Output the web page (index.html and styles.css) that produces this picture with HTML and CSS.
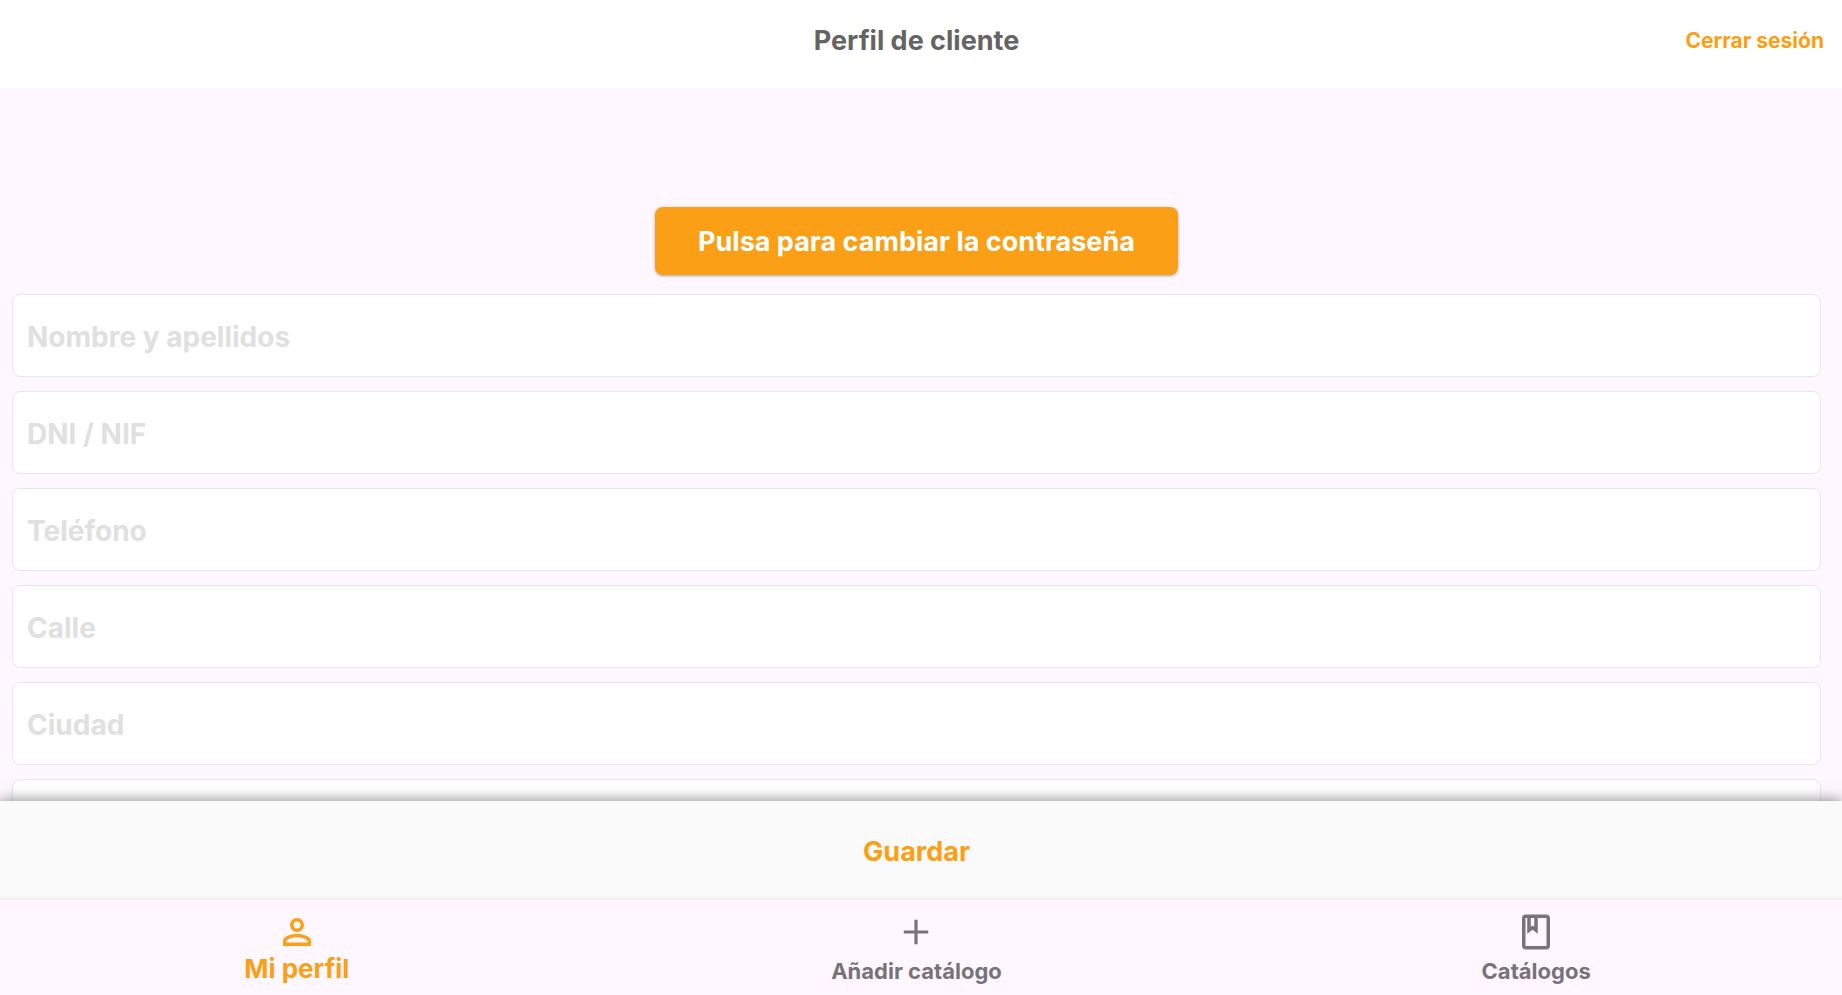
FILE: index.html
```
<!DOCTYPE html>
<html lang="es">
<head>
<meta charset="UTF-8">
<meta name="viewport" content="width=device-width,initial-scale=1">
<title>Perfil de cliente</title>
<link rel="stylesheet" href="styles.css">
</head>
<body>
<header class="topbar">
  <h1>Perfil de cliente</h1>
  <button type="button" class="logout">Cerrar sesión</button>
</header>

<main class="content">
  <button type="button" class="password-btn">Pulsa para cambiar la contraseña</button>
  <form class="fields" id="profileForm">
    <input type="text" name="nombre" aria-label="Nombre y apellidos" placeholder="Nombre y apellidos">
    <input type="text" name="dni" aria-label="DNI / NIF" placeholder="DNI / NIF">
    <input type="tel" name="telefono" aria-label="Teléfono" placeholder="Teléfono">
    <input type="text" name="calle" aria-label="Calle" placeholder="Calle">
    <input type="text" name="ciudad" aria-label="Ciudad" placeholder="Ciudad">
    <input type="text" name="provincia" aria-label="Provincia">
  </form>
</main>

<div class="savebar">
  <button type="submit" form="profileForm" class="save">Guardar</button>
</div>

<nav class="tabs">
  <a href="#perfil" class="tab active" aria-current="page">
    <svg viewBox="0 0 24 24" fill="currentColor"><path d="M12 6a2 2 0 1 1 0 4 2 2 0 0 1 0-4m0 9c2.7 0 5.8 1.29 6 2v1H6v-.99c.2-.72 3.3-2.01 6-2.01m0-11a4 4 0 1 0 0 8 4 4 0 0 0 0-8zm0 9c-2.67 0-8 1.34-8 4v3h16v-3c0-2.66-5.33-4-8-4z"/></svg>
    <span>Mi perfil</span>
  </a>
  <a href="#nuevo" class="tab">
    <svg viewBox="0 0 24 24" fill="currentColor"><path d="M19 12.9h-6.1V19h-1.8v-6.1H5v-1.8h6.1V5h1.8v6.1H19z"/></svg>
    <span>Añadir catálogo</span>
  </a>
  <a href="#catalogos" class="tab">
    <svg viewBox="0 0 24 24" fill="currentColor"><path d="M18 2H6c-1.1 0-2 .9-2 2v16c0 1.1.9 2 2 2h12c1.1 0 2-.9 2-2V4c0-1.1-.9-2-2-2zM9 4h2v5l-1-.75L9 9V4zm9 16H6V4h1v9l3-2.25L13 13V4h5v16z"/></svg>
    <span>Catálogos</span>
  </a>
</nav>
</body>
</html>
```
FILE: styles.css
```
:root{--bg:#fef7ff;--bar:#fafafa;--accent:#fa9f16;--title:#646464;--muted:#787279;
      --line:#e9e6eb;--hint:#e0e0e0}
*{box-sizing:border-box;margin:0;padding:0}
body,button,input{font-family:Inter,"Open Sans",sans-serif;font-weight:700}
button{border:none;background:none;cursor:pointer}
body{height:100vh;display:flex;flex-direction:column;overflow:hidden;background:var(--bg)}

/* cabecera */
.topbar{display:grid;grid-template-columns:1fr auto 1fr;align-items:center;
  height:88px;padding:0 18px 6px 9px;background:#fff}
.topbar h1{grid-column:2;font-size:27px;line-height:32px;color:var(--title)}
.logout{justify-self:end;font-size:21px;line-height:32px;color:var(--accent)}

/* formulario */
.content{flex:1;min-height:0;overflow:hidden;padding:119px 21px 0 12px;
  display:flex;flex-direction:column;align-items:center}
.password-btn{flex:none;height:68px;padding:0 43px;border-radius:8px;background:var(--accent);color:#fff;
  font-size:27px;box-shadow:0 1px 3px rgba(0,0,0,.35)}
.fields{width:100%;margin-top:19px;display:flex;flex-direction:column;gap:14px}
.fields input{width:100%;height:83px;padding:2px 14px 0;border:1px solid var(--line);border-radius:8px;
  background:#fff;color:var(--title);font-size:28px;outline:none}
.fields input::placeholder{color:var(--hint);opacity:1}

/* guardar */
.savebar{position:relative;display:flex;height:99px;padding-right:9px;background:var(--bar);
  box-shadow:0 0 14px rgba(0,0,0,.5)}
.save{flex:1;padding-top:2px;font-size:27px;color:var(--accent)}

/* navegación inferior */
.tabs{position:relative;display:grid;grid-template-columns:repeat(3,1fr);height:95px;
  margin:0 -4px 0 -13px;background:var(--bg);box-shadow:0 0 5px rgba(0,0,0,.1)}
.tab{display:flex;flex-direction:column;align-items:center;padding-top:11px;
  color:var(--muted);font-size:22px;line-height:36px;text-decoration:none}
.tab svg{width:42px;height:42px}
.tab.active{color:var(--accent);font-size:26px;line-height:32px}
```
